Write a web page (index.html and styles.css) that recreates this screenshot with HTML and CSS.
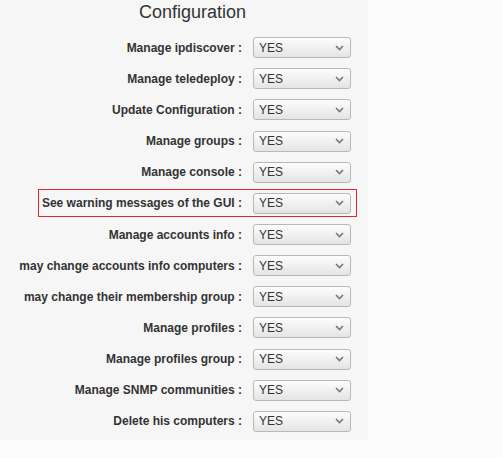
FILE: index.html
```html
<!DOCTYPE html>
<html>
<head>
<meta charset="utf-8">
<link rel="stylesheet" href="styles.css">
</head>
<body>
<div class="panel">
  <h2 class="title">Configuration</h2>
  <div class="rows">
    <div class="row"><span class="label">Manage ipdiscover :</span><div class="sel"><span>YES</span><svg width="9" height="6" viewBox="0 0 9 6"><path d="M1 1l3.5 3.5L8 1" fill="none" stroke="#777" stroke-width="1.6"/></svg></div></div>
    <div class="row"><span class="label">Manage teledeploy :</span><div class="sel"><span>YES</span><svg width="9" height="6" viewBox="0 0 9 6"><path d="M1 1l3.5 3.5L8 1" fill="none" stroke="#777" stroke-width="1.6"/></svg></div></div>
    <div class="row"><span class="label">Update Configuration :</span><div class="sel"><span>YES</span><svg width="9" height="6" viewBox="0 0 9 6"><path d="M1 1l3.5 3.5L8 1" fill="none" stroke="#777" stroke-width="1.6"/></svg></div></div>
    <div class="row"><span class="label">Manage groups :</span><div class="sel"><span>YES</span><svg width="9" height="6" viewBox="0 0 9 6"><path d="M1 1l3.5 3.5L8 1" fill="none" stroke="#777" stroke-width="1.6"/></svg></div></div>
    <div class="row"><span class="label">Manage console :</span><div class="sel"><span>YES</span><svg width="9" height="6" viewBox="0 0 9 6"><path d="M1 1l3.5 3.5L8 1" fill="none" stroke="#777" stroke-width="1.6"/></svg></div></div>
    <div class="row warn"><span class="label">See warning messages of the GUI :</span><div class="sel"><span>YES</span><svg width="9" height="6" viewBox="0 0 9 6"><path d="M1 1l3.5 3.5L8 1" fill="none" stroke="#777" stroke-width="1.6"/></svg></div></div>
    <div class="row"><span class="label">Manage accounts info :</span><div class="sel"><span>YES</span><svg width="9" height="6" viewBox="0 0 9 6"><path d="M1 1l3.5 3.5L8 1" fill="none" stroke="#777" stroke-width="1.6"/></svg></div></div>
    <div class="row"><span class="label">may change accounts info computers :</span><div class="sel"><span>YES</span><svg width="9" height="6" viewBox="0 0 9 6"><path d="M1 1l3.5 3.5L8 1" fill="none" stroke="#777" stroke-width="1.6"/></svg></div></div>
    <div class="row"><span class="label">may change their membership group :</span><div class="sel"><span>YES</span><svg width="9" height="6" viewBox="0 0 9 6"><path d="M1 1l3.5 3.5L8 1" fill="none" stroke="#777" stroke-width="1.6"/></svg></div></div>
    <div class="row"><span class="label">Manage profiles :</span><div class="sel"><span>YES</span><svg width="9" height="6" viewBox="0 0 9 6"><path d="M1 1l3.5 3.5L8 1" fill="none" stroke="#777" stroke-width="1.6"/></svg></div></div>
    <div class="row"><span class="label">Manage profiles group :</span><div class="sel"><span>YES</span><svg width="9" height="6" viewBox="0 0 9 6"><path d="M1 1l3.5 3.5L8 1" fill="none" stroke="#777" stroke-width="1.6"/></svg></div></div>
    <div class="row"><span class="label">Manage SNMP communities :</span><div class="sel"><span>YES</span><svg width="9" height="6" viewBox="0 0 9 6"><path d="M1 1l3.5 3.5L8 1" fill="none" stroke="#777" stroke-width="1.6"/></svg></div></div>
    <div class="row"><span class="label">Delete his computers :</span><div class="sel"><span>YES</span><svg width="9" height="6" viewBox="0 0 9 6"><path d="M1 1l3.5 3.5L8 1" fill="none" stroke="#777" stroke-width="1.6"/></svg></div></div>
  </div>
</div>
</body>
</html>
```
FILE: styles.css
```css
html, body {
  margin: 0;
  padding: 0;
  background: #fcfcfc;
}
body {
  font-family: "Liberation Sans", Arial, sans-serif;
  color: #333;
}
.panel {
  width: 368px;
  height: 440px;
  background: #f6f6f6;
  box-sizing: border-box;
  padding-top: 2px;
}
.title {
  margin: 0;
  height: 30px;
  font-size: 18px;
  font-weight: normal;
  line-height: 21px;
  text-align: center;
  padding-left: 17px;
  color: #333;
}
.rows {
  display: flex;
  flex-direction: column;
}
.row {
  height: 31.17px;
  display: flex;
  align-items: center;
  justify-content: flex-end;
  padding-right: 17px;
  box-sizing: border-box;
}
.row.warn {
  height: 28px;
  margin: 1.58px 11px 1.59px 38px;
  border: 1px solid #e5262d;
  padding-right: 5px;
}
.label {
  font-size: 12px;
  font-weight: bold;
  color: #333;
  white-space: nowrap;
}
.sel {
  margin-left: 11px;
  width: 98px;
  height: 21px;
  box-sizing: border-box;
  border: 1px solid #b8b8b8;
  border-radius: 3px;
  background: linear-gradient(#fdfdfd, #e4e4e4);
  display: flex;
  align-items: center;
  justify-content: space-between;
  padding: 0 6px 0 5px;
  font-size: 12px;
  color: #333;
}
.sel svg {
  display: block;
}
```
